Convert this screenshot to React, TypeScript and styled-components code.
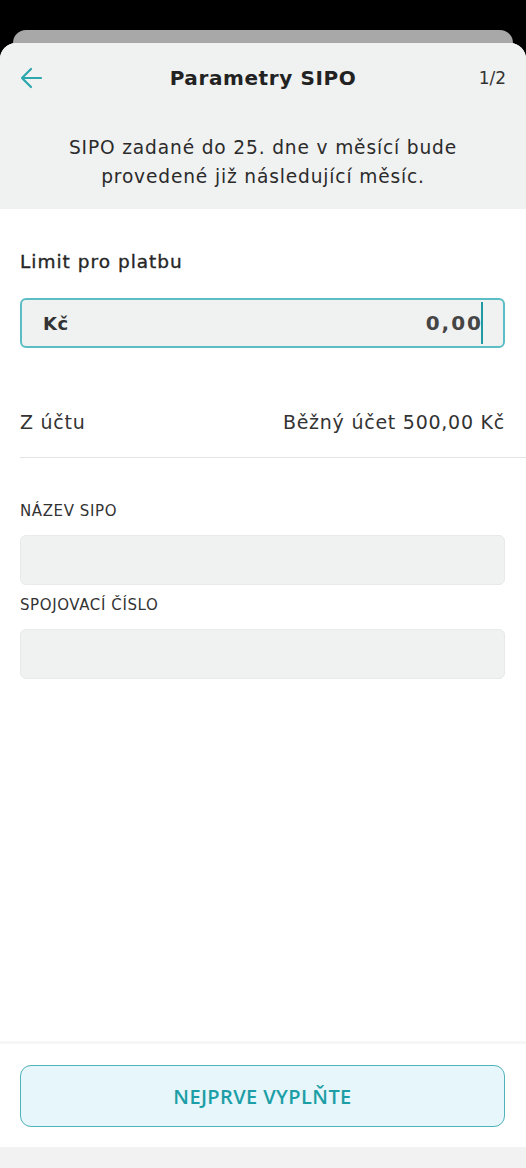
import React from "react";
import styled, { createGlobalStyle } from "styled-components";

const Global = createGlobalStyle`
  html, body { margin: 0; padding: 0; background: #000; }
  body { font-family: "DejaVu Sans", "Noto Sans", sans-serif; }
  * { box-sizing: border-box; }
`;

const Screen = styled.div`
  width: 526px;
  height: 1168px;
  background: #000;
  display: flex;
  flex-direction: column;
  padding-top: 30px;
  overflow: hidden;
`;

const BackSheet = styled.div`
  height: 13px;
  margin: 0 13px;
  background: #a8a8a8;
  border-radius: 14px 14px 0 0;
`;

const Sheet = styled.div`
  flex: 1;
  display: flex;
  flex-direction: column;
  background: #fff;
  border-radius: 16px 16px 0 0;
  overflow: hidden;
`;

const Header = styled.div`
  background: #f0f1f1;
  padding: 0 20px 18px;
`;

const TopBar = styled.div`
  height: 70px;
  display: grid;
  grid-template-columns: 60px 1fr 60px;
  align-items: center;
`;

const BackBtn = styled.button`
  border: 0;
  background: none;
  padding: 0;
  width: 24px;
  height: 24px;
  display: flex;
  align-items: center;
  justify-content: flex-start;
  color: #2ba7ae;
`;

const Title = styled.h1`
  margin: 0;
  text-align: center;
  font-size: 20px;
  font-weight: 700;
  color: #222;
  letter-spacing: 0.6px;
`;

const Step = styled.span`
  text-align: right;
  font-size: 17px;
  color: #333;
`;

const Info = styled.p`
  margin: 20px 0 0;
  text-align: center;
  font-size: 18.6px;
  line-height: 29px;
  letter-spacing: 0.85px;
  color: #2b2b2b;
`;

const Body = styled.div`
  flex: 1;
  display: flex;
  flex-direction: column;
  padding-top: 41px;
`;

const Section = styled.div`
  padding: 0 21px 0 20px;
`;

const FieldTitle = styled.div`
  font-size: 18.5px;
  line-height: 24px;
  color: #262626;
  letter-spacing: 1px;
  -webkit-text-stroke: 0.35px #262626;
  margin-bottom: 24px;
`;

const AmountBox = styled.div`
  height: 50px;
  border: 2px solid #5bbec4;
  border-radius: 6px;
  background: #f0f1f1;
  display: flex;
  align-items: center;
  justify-content: space-between;
  padding: 0 20px 0 21px;
`;

const Currency = styled.span`
  font-size: 18px;
  font-weight: 700;
  color: #333;
  letter-spacing: 0.5px;
`;

const Amount = styled.span`
  display: flex;
  align-items: center;
  font-size: 20px;
  font-weight: 700;
  color: #454545;
  letter-spacing: 2px;
`;

const Caret = styled.span`
  display: inline-block;
  width: 2px;
  height: 42px;
  background: #1f9aa2;
  margin-left: -2px;
`;

const AccountRow = styled.div`
  margin-top: 44px;
  height: 60px;
  display: flex;
  justify-content: space-between;
  align-items: center;
  padding: 0 21px 0 20px;
  font-size: 19px;
  letter-spacing: 0.75px;
  color: #333;
`;

const Divider = styled.div`
  height: 1px;
  background: #e4e4e4;
  margin-left: 20px;
  margin-top: 5px;
`;

const Fields = styled.div`
  padding: 43px 21px 0 20px;
  display: flex;
  flex-direction: column;
`;

const SmallLabel = styled.div`
  font-size: 15px;
  color: #333;
  height: 21px;
  line-height: 21px;
  margin-bottom: 13px;
  letter-spacing: 0.6px;
`;

const TextField = styled.div`
  height: 50px;
  background: #f0f1f1;
  border: 1px solid #e8e9e9;
  border-radius: 6px;
  margin-bottom: 10px;
`;

const Spacer = styled.div`
  flex: 1;
`;

const Footer = styled.div`
  border-top: 3px solid #f6f6f6;
  padding: 21px 21px 20px 20px;
  background: #fff;
`;

const PrimaryBtn = styled.button`
  width: 100%;
  height: 62px;
  border: 1.5px solid #4fb3b8;
  border-radius: 11px;
  background: #e6f6fa;
  color: #1c9ea6;
  font-family: "Open Sans", "Noto Sans", sans-serif;
  font-weight: 600;
  font-size: 20px;
  letter-spacing: 0.4px;
`;

const BottomBar = styled.div`
  height: 21px;
  background: #f2f2f2;
`;

export default function App() {
  return (
    <>
      <Global />
      <Screen>
        <BackSheet />
        <Sheet>
          <Header>
            <TopBar>
              <BackBtn aria-label="Zpět">
                <svg width="23" height="22" viewBox="0 0 23 22" fill="none">
                  <path d="M21 11H2M11 2L2 11l9 9" stroke="currentColor" strokeWidth="2.2" strokeLinecap="round" strokeLinejoin="round" />
                </svg>
              </BackBtn>
              <Title>Parametry SIPO</Title>
              <Step>1/2</Step>
            </TopBar>
            <Info>
              SIPO zadané do 25. dne v měsící bude
              <br />
              provedené již následující měsíc.
            </Info>
          </Header>
          <Body>
            <Section>
              <FieldTitle>Limit pro platbu</FieldTitle>
              <AmountBox>
                <Currency>Kč</Currency>
                <Amount>
                  0,00
                  <Caret />
                </Amount>
              </AmountBox>
            </Section>
            <AccountRow>
              <span>Z účtu</span>
              <span>Běžný účet 500,00 Kč</span>
            </AccountRow>
            <Divider />
            <Fields>
              <SmallLabel>NÁZEV SIPO</SmallLabel>
              <TextField />
              <SmallLabel>SPOJOVACÍ ČÍSLO</SmallLabel>
              <TextField />
            </Fields>
            <Spacer />
            <Footer>
              <PrimaryBtn>NEJPRVE VYPLŇTE</PrimaryBtn>
            </Footer>
            <BottomBar />
          </Body>
        </Sheet>
      </Screen>
    </>
  );
}
